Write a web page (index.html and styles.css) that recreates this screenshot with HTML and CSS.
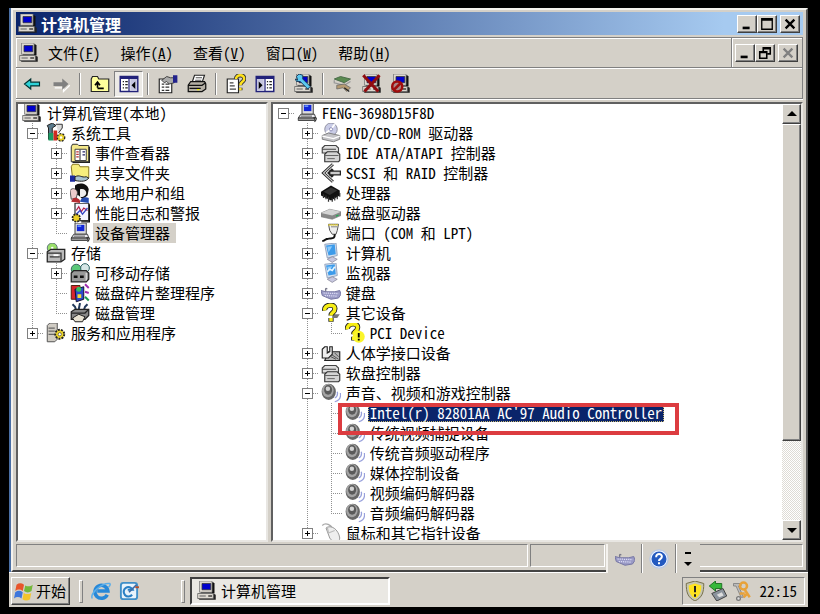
FILE: index.html
```
<!DOCTYPE html>
<html lang="zh-CN">
<head>
<meta charset="utf-8">
<title>计算机管理</title>
<link rel="stylesheet" href="styles.css">
</head>
<body>

<!-- icon sheet, every icon on a 16x16 grid -->
<svg class="sheet" aria-hidden="true">
<symbol id="pc" viewBox="0 0 16 16">
<path d="M3 1h10l1 1v8H3z" fill="#111"/><path d="M2 0h10v9H2z" fill="#ddd8d0" stroke="#777" stroke-width=".6"/><path d="M4 2h7v5H4z" fill="#00c" stroke="#333" stroke-width=".6"/>
<path d="M1 10h12l2 1v4H2l-1-1z" fill="#222"/><path d="M0.500 10h12.500v4H.5z" fill="#dcd8d0" stroke="#666" stroke-width=".6"/><path d="M2 12h5" stroke="#777"/><path d="M9 12h3" stroke="#222"/>
</symbol>
<symbol id="laptop" viewBox="0 0 16 16">
<path d="M4 0h9v9H4z" fill="#ddd" stroke="#444" stroke-width=".8"/><path d="M5.500 1.500h6v5h-6z" fill="#1226d8"/><path d="M6 2h3v1H6z" fill="#8bf"/>
<path d="M3 9h11l1 3H1z" fill="#e8e8ee" stroke="#444" stroke-width=".8"/><path d="M1 12h13v2H1z" fill="#999" stroke="#222" stroke-width=".6"/><path d="M3 10.500h9" stroke="#777"/><path d="M13 12c3-1 3 1 1 3" fill="none" stroke="#333"/>
</symbol>
<symbol id="back" viewBox="0 0 16 16"><path d="M2 8l5-4v2.500h7v3H7V12z" fill="#2ed3d8" stroke="#033" stroke-width=".9"/></symbol>
<symbol id="fwd" viewBox="0 0 16 16"><path d="M15 9l-5 5v-3H3" fill="none" stroke="#fff"/><path d="M14 8L9 3.500v3H2v3h7v3z" fill="#808080"/></symbol>
<symbol id="up" viewBox="0 0 16 16"><path d="M1 4l1-2h4l1 2h8v10H1z" fill="#ffff9c" stroke="#222" stroke-width=".9"/><path d="M6 11V7M4 9l2-2.500L8 9M6 11.500h5" fill="none" stroke="#000" stroke-width="1.300"/></symbol>
<symbol id="tree" viewBox="0 0 16 16"><path d="M1 2h14v12H1z" fill="#fff" stroke="#22227a" stroke-width="1.200"/><path d="M1 2h14v2H1z" fill="#22227a"/><path d="M8 4v10" stroke="#22227a"/><path d="M9 4h5.500v9.500H9z" fill="#c5c5df"/><path d="M3 6h1m1 0h2M3 8.500h1m1 0h2M3 11h1m1 0h2" stroke="#222"/><path d="M13 6v6l-3-3z" fill="#000"/></symbol>
<symbol id="action" viewBox="0 0 16 16"><path d="M1 2h14v12H1z" fill="#fff" stroke="#22227a" stroke-width="1.200"/><path d="M1 2h14v2H1z" fill="#22227a"/><path d="M8 4v10" stroke="#22227a"/><path d="M1.500 4H7v9.500H1.500z" fill="#c5c5df"/><path d="M9.500 6h1m1 0h2m-4 2.500h1m1 0h2m-4 2.500h1m1 0h2" stroke="#222"/><path d="M3 6v6l3-3z" fill="#000"/></symbol>
<symbol id="props" viewBox="0 0 16 16"><path d="M1 4h10v11H1z" fill="#fff" stroke="#222" stroke-width=".9"/><path d="M3 8h2m1 0h3M3 10.500h2m1 0h3M3 13h2m1 0h3" stroke="#333"/><path d="M3 5l4-3 3 1h3v4l-4 1-2-2-2 1z" fill="#aaa" stroke="#333" stroke-width=".7"/><path d="M12 1h3.500v6H12z" fill="#22228c"/></symbol>
<symbol id="print" viewBox="0 0 16 16"><path d="M6 1h8l-2 6H4z" fill="#fff" stroke="#222" stroke-width=".9"/><path d="M7 3h5M6.500 5h5" stroke="#555" stroke-width=".8"/><path d="M3 6h11l1 2v4l-3 2H1V9z" fill="#b5b0a5" stroke="#111"/><path d="M1 9h11l3-2M2 11.500h9" fill="none" stroke="#111"/><path d="M8 12h2v1H8z" fill="#ee0"/></symbol>
<symbol id="help" viewBox="0 0 16 16"><path d="M1 4h9v11H1z" fill="#fff" stroke="#222" stroke-width=".9"/><path d="M3 7h3M3 9.500h4M3 12h5" stroke="#444"/><path d="M8 4c0-4 7-4 6.500 0 0 2.500-3 2-3 5M11.500 11v2" fill="none" stroke="#333" stroke-width="3.400"/><path d="M8 4c0-4 7-4 6.500 0 0 2.500-3 2-3 5M11.500 11v2" fill="none" stroke="#ffe21c" stroke-width="2"/></symbol>
<symbol id="scan" viewBox="0 0 16 16"><use href="#pc"/><path d="M2 2l2-2 3 1v3l6 6-2 2-6-6H2l-1-2 2 1z" fill="#5cc8ee" stroke="#135" stroke-width=".7"/></symbol>
<symbol id="update" viewBox="0 0 16 16"><path d="M1 4l5-2 8 2-5 3z" fill="#5a8a50" stroke="#464" stroke-width=".7"/><path d="M1 5v2l8 2 5-3" fill="none" stroke="#999"/><path d="M3 9l6-1 5 3-3 3-3-3-5 1z" fill="#b59b72" stroke="#666" stroke-width=".6"/><path d="M9 11l4 3" stroke="#222"/></symbol>
<symbol id="uninst" viewBox="0 0 16 16"><use href="#pc"/><path d="M1 1l12 13M14 1L2 14" stroke="#900c10" stroke-width="2.400"/></symbol>
<symbol id="disable" viewBox="0 0 16 16"><use href="#pc"/><circle cx="5" cy="10" r="4" fill="#a88" stroke="#a00d0d" stroke-width="2"/><path d="M2 13l6-6" stroke="#a00d0d" stroke-width="2"/></symbol>
<symbol id="tools" viewBox="0 0 16 16"><path d="M1 2l4-2 3 2-3 2v9H2V4z" fill="#5a7a8c" stroke="#222" stroke-width=".8"/><path d="M2 8h4v6H2z" fill="#1d9a63"/><path d="M6 6h3v8H6z" fill="#d02a20"/><path d="M8 1l5 0v3l-3 4" fill="#ddd" stroke="#333" stroke-width=".8"/><circle cx="12" cy="11.500" r="3" fill="#e5cc2a" stroke="#222" stroke-dasharray="1.500 1"/><circle cx="12" cy="11.500" r="1" fill="#fff"/></symbol>
<symbol id="event" viewBox="0 0 16 16"><path d="M1 3l1-2h4l1 1h8v13H1z" fill="#f4e88a" stroke="#333" stroke-width=".8"/><path d="M4 5h9v9H4z" fill="#fff" stroke="#444" stroke-width=".8"/><path d="M8 5v9" stroke="#555"/><path d="M5 7h2M5 9h2m-2 2h2" stroke="#b33"/><path d="M10 7h2m-2 2.500h2" stroke="#226"/><path d="M15.500 3v12.500H2" fill="none" stroke="#222"/></symbol>
<symbol id="share" viewBox="0 0 16 16"><path d="M1 3l1-2h5l1 2h7v9H2z" fill="#f7ee7c" stroke="#887820" stroke-width=".8"/><path d="M0 10h4v5H0z" fill="#1a2aa0"/><path d="M4 11c4-2 5 1 9 0l2 1c-2 3-6 3-11 2z" fill="#aac4d0" stroke="#222" stroke-width=".8"/></symbol>
<symbol id="users" viewBox="0 0 16 16"><path d="M4 2c3-3 10-2 11 3l-1 5-4 3-3-3-3-1z" fill="#111"/><path d="M8 5c3-1 5 1 5 3s-3 4-5 3z" fill="#eee"/><path d="M0 6c2-3 6-1 6 2l-1 4-4 1z" fill="#ecc" stroke="#444" stroke-width=".7"/><path d="M1 15c1-4 5-4 7-1v2z" fill="#b52c32"/><path d="M8 15c1-4 5-4 7-3v4z" fill="#234bb0"/></symbol>
<symbol id="perf" viewBox="0 0 16 16"><path d="M4 0h11v14H4z" fill="#f5f5ff" stroke="#333"/><path d="M5 6l2-3 2 4 2-3 3 2" fill="none" stroke="#b21d46"/><path d="M5 9l3-3 2 3 4-5" fill="none" stroke="#3445c5"/><circle cx="5" cy="12" r="3" fill="#ecd026" stroke="#222" stroke-width="1.400" stroke-dasharray="1.500 .8"/><path d="M15.500 1v14H9" fill="none" stroke="#111"/></symbol>
<symbol id="storage" viewBox="0 0 16 16"><circle cx="5" cy="4" r="4" fill="#9be06a" stroke="#567" stroke-width=".7"/><circle cx="5" cy="4" r="1" fill="#fff"/><path d="M1 7l3-2h11v8l-3 2H1z" fill="#bbb" stroke="#222"/><path d="M1 8h11v7M3 11h8" fill="none" stroke="#333"/><path d="M6 9h4v1.500H6z" fill="#fff"/></symbol>
<symbol id="removable" viewBox="0 0 16 16"><circle cx="5" cy="5" r="4" fill="#5cc878" stroke="#355" stroke-width=".7"/><circle cx="12" cy="4" r="3.500" fill="#d6e6e6" stroke="#366" stroke-width=".8"/><path d="M1 8l2-2h10l2 2v5l-2 2H1z" fill="#999" stroke="#222"/><path d="M3 10h3v2H3zm5 0h3v2H8z" fill="#111"/><path d="M13 8v6" stroke="#ddd"/></symbol>
<symbol id="defrag" viewBox="0 0 16 16"><path d="M1 2h7v11H1z" fill="#d8252c" stroke="#521" stroke-width=".8"/><path d="M4 5l7-2v10l-6 2z" fill="#2b4bcc" stroke="#113" stroke-width=".8"/><circle cx="7" cy="5" r="2" fill="#38c05c"/><path d="M6 9h3v3H6z" fill="#f3db36"/><path d="M12 1l3 3M12 7l3 1" stroke="#a02db0" stroke-width="1.500"/><path d="M12 11l3 3" stroke="#1b9b4c" stroke-width="1.500"/></symbol>
<symbol id="diskmgmt" viewBox="0 0 16 16"><path d="M2 1l2 2 1 3M8 0l-1 5M14 1l-2 2-1 3" fill="none" stroke="#223a5c" stroke-width="1.600"/><path d="M1 7l3-2h11v5l-3 3H1z" fill="#888" stroke="#222"/><path d="M1 8h11l3-3" fill="none" stroke="#222"/><path d="M2 12l5-3 5 2-2 4H4z" fill="#e8e2d2" stroke="#222" stroke-width=".8"/></symbol>
<symbol id="services" viewBox="0 0 16 16"><path d="M1 2l2-2h6v13l-2 2H1z" fill="#d0ccc4" stroke="#555" stroke-width=".8"/><path d="M2 4h5M2 6.500h5M2 9h5" stroke="#666"/><circle cx="11" cy="9" r="3.600" fill="#f0d82a" stroke="#222" stroke-width="1.500" stroke-dasharray="1.600 .9"/><circle cx="11" cy="9" r="1.300" fill="#fff" stroke="#333" stroke-width=".5"/></symbol>
<symbol id="cd" viewBox="0 0 16 16"><circle cx="8" cy="5" r="5" fill="#c9cce6" stroke="#889" stroke-width=".7"/><path d="M8 5l3-4M8 5l-4 3" stroke="#fff" stroke-width="1.500"/><circle cx="8" cy="5" r="1.300" fill="#fff" stroke="#77a" stroke-width=".6"/><path d="M1 10l5-2 9 2v3l-5 2-9-2z" fill="#c4c4c8" stroke="#777" stroke-width=".7"/><path d="M1 10.500l9 2 5-2" fill="none" stroke="#fff"/></symbol>
<symbol id="ctrl" viewBox="0 0 16 16"><path d="M1 4l2-2h9l2 2v4H1z" fill="#ddd" stroke="#444" stroke-width=".9"/><path d="M1 5h11" stroke="#444" stroke-width=".8"/><path d="M3 9l2-2h8l2 2v5l-1 1H3z" fill="#d4d4d4" stroke="#333" stroke-width=".9"/><path d="M3 10h11M5 12.500h6" fill="none" stroke="#666" stroke-width=".8"/></symbol>
<symbol id="scsi" viewBox="0 0 16 16"><path d="M9.500 1L2 8l7.500 7M9.500 5l-3 3 3 3" fill="none" stroke="#222" stroke-width="2.400"/><path d="M9.500 1L2 8l7.500 7" fill="none" stroke="#ccc" stroke-width=".9"/><path d="M7 6.500h8.500v3H7z" fill="#ccc" stroke="#222"/></symbol>
<symbol id="cpu" viewBox="0 0 16 16"><path d="M0 7l8-5 7 4v4l-7 4-8-4z" fill="#111"/><path d="M2 9v3m2-2v3m2-2v4m3-3v3m2-4v3m2-4v3m2-5v3" stroke="#333"/><path d="M2 7l6-3.500L13 6l-6 3.500z" fill="#333"/></symbol>
<symbol id="disk" viewBox="0 0 16 16"><path d="M0 8l7-3 9 2v3l-7 3-9-2z" fill="#888" stroke="#777" stroke-width=".5"/><path d="M0 8l7-3 9 2-7 3z" fill="#d4d4d4"/><path d="M12 10.500l2-.8" stroke="#2a5"/></symbol>
<symbol id="port" viewBox="0 0 16 16"><path d="M6 1h8l-1 5-1 3H9L7 6z" fill="#eee" stroke="#555" stroke-width=".8"/><path d="M6 1.500h8" stroke="#e8d22e" stroke-width="1.500" stroke-dasharray="1 .6"/><path d="M8 3h5" stroke="#999"/><path d="M11 9c0 4-2 3-5 3.500-3 0-2 1.500-5 2" fill="none" stroke="#111" stroke-width="1.600"/></symbol>
<symbol id="lcd" viewBox="0 0 16 16"><path d="M3 1l9-1 1 10-8 2z" fill="#d6e0ee" stroke="#889ab8" stroke-width=".7"/><path d="M4 2l7-1 .8 8L6 10z" fill="#3d9bea"/><path d="M5 3l4-.5-3 5z" fill="#8fcbfa"/><path d="M5 13l4-2 4 2-4 2.500z" fill="#c8c8e0" stroke="#889" stroke-width=".6"/></symbol>
<symbol id="monitor" viewBox="0 0 16 16"><use href="#lcd"/><path d="M5 7l2-2 2 1 2-3" fill="none" stroke="#e6f6ff" stroke-width="1.300"/></symbol>
<symbol id="kbd" viewBox="0 0 16 16"><path d="M4 7c-1-3 0-3 1-2" fill="none" stroke="#778"/><path d="M0 6l4 1 7 0 4-1 1 3-2 3-6 1-7-3z" fill="#9a9ac6" stroke="#7878a4" stroke-width=".8"/><path d="M2 8l12 .5M3 10l10 .5" stroke="#dcdcf4" stroke-dasharray="1 .7"/></symbol>
<symbol id="unknown" viewBox="0 0 16 16"><path d="M9 9h6l-2 3H9z" fill="#777"/><path d="M3 6C2 1 12 0 11 5c0 3-3 2.500-3 5M8 12v3" fill="none" stroke="#222" stroke-width="4.200"/><path d="M3 6C2 1 12 0 11 5c0 3-3 2.500-3 5M8 12v2.600" fill="none" stroke="#f7ee14" stroke-width="2.800"/></symbol>
<symbol id="warn" viewBox="0 0 16 16"><use href="#unknown" x="-1" y="-1"/><circle cx="11" cy="11" r="4.800" fill="#fbf52a"/><path d="M11 8v3.500m0 1v1.500" stroke="#000" stroke-width="1.500"/></symbol>
<symbol id="hid" viewBox="0 0 16 16"><path d="M6 7h9v7H3z" fill="#b5b5b5" stroke="#222" stroke-width=".9"/><path d="M8 9l6 4M8 11l4 2M11 8l3 3" stroke="#555" stroke-width=".8"/><path d="M1 5l2-2h2v5l2-1V3h2v6l-3 3H1z" fill="#eee" stroke="#222" stroke-width=".9"/></symbol>
<symbol id="sound" viewBox="0 0 16 16"><path d="M11 12c2-1 2.500-3 2-5M11 15c4-1 5-4 4.500-7" fill="none" stroke="#98a1dc"/><ellipse cx="6.200" cy="7" rx="5.700" ry="6.500" fill="#686868"/><ellipse cx="5.500" cy="6" rx="4.600" ry="5.300" fill="#a4a4a4"/><ellipse cx="5.700" cy="5.500" rx="3.200" ry="3.900" fill="#5a5a5a"/><circle cx="5.500" cy="4.500" r="1.800" fill="#d4d4d4"/></symbol>
<symbol id="mouse" viewBox="0 0 16 16"><path d="M1 2c3-3 7 0 8 2" fill="none" stroke="#aaa"/><path d="M4 4c4-3 10 1 11 8 0 4-6 4-8 0z" fill="#eee" stroke="#999" stroke-width=".8"/><path d="M5 3l1 5 5-2" fill="none" stroke="#bbb"/></symbol>
<symbol id="flag" viewBox="0 0 16 16"><path d="M2 3c2-1.500 4-1.500 6 0L7 8C5 6.500 3 6.500 1 8z" fill="#e8552b"/><path d="M9 3.500c2 1 4 1 6-.5l-1 5c-2 1.500-4 1.500-6 0z" fill="#74b83a"/><path d="M1 9c2-1.500 4-1.500 6 0l-1 5c-2-1.500-4-1.500-6 0z" fill="#3e76dc"/><path d="M7.800 9.500c2 1.300 4 1.300 6 0l-1 5c-2 1.500-4 1.500-6 0z" fill="#f3c42c"/></symbol>
<symbol id="ie" viewBox="0 0 16 16"><path d="M13 11A5.200 5.200 0 1 1 13.500 8H5" fill="none" stroke="#2788d8" stroke-width="2.800"/><path d="M1 14C-1 10 9 1 15 2c1 1 0 2-1 3" fill="none" stroke="#5aaeea" stroke-width="1.200"/></symbol>
<symbol id="desk" viewBox="0 0 16 16"><rect x="1.500" y="1.500" width="13" height="13" rx="2" fill="#e8f3fb" stroke="#3f8fc8" stroke-width="1.500"/><path d="M10.500 11A3.800 3.800 0 1 1 11 7H7" fill="none" stroke="#2a80c4" stroke-width="1.700"/><path d="M8 9l6-6" stroke="#3a6ca8" stroke-width="1.400"/><path d="M13 5h3" stroke="#b5502c" stroke-width="1.500"/></symbol>
<symbol id="shield" viewBox="0 0 16 16"><path d="M8 0l7 2c0 7-1 11-7 14C2 13 1 9 1 2z" fill="#c6c6b0" stroke="#77704c" stroke-width=".8"/><path d="M8 2l5 1.500c0 5-1 8-5 10.500-4-2.500-5-5.500-5-10.500z" fill="#ffe320"/><path d="M8 4v5m0 1.500v2" stroke="#222" stroke-width="1.600"/></symbol>
<symbol id="eject" viewBox="0 0 16 16"><path d="M3 10l9-4 3 6-8 4z" fill="#8b939c" stroke="#444" stroke-width=".8"/><path d="M7 11l4-2 1.500 2.500L9 13z" fill="#ddd"/><path d="M1 4l5-4v2h5v4H6v2z" fill="#36b83a" stroke="#176a1b" stroke-width=".7"/></symbol>
<symbol id="keys" viewBox="0 0 16 16"><path d="M2 2h6v2H6l4 9H8L4 4H2z" fill="#bbb" stroke="#777" stroke-width=".6"/><circle cx="6" cy="14" r="1.500" fill="#ddd" stroke="#777"/><circle cx="10" cy="4" r="2.800" fill="none" stroke="#e8a23a" stroke-width="2"/><path d="M11 7l4 6M11 10H7m6 0l-3 3" stroke="#e8a23a" stroke-width="2"/></symbol>
<symbol id="ask" viewBox="0 0 16 16"><circle cx="8" cy="8" r="7.300" fill="#eef4ff" stroke="#b9c8e4"/><circle cx="8" cy="8" r="6" fill="#2359c0"/><path d="M5.700 6.500c0-3.400 4.800-3 4.600-.3 0 1.700-2.300 1.600-2.300 3.300m0 1v1.600" fill="none" stroke="#fff" stroke-width="1.600"/></symbol>
<symbol id="min" viewBox="0 0 16 16"><path d="M3 11h8v3H3z"/></symbol>
<symbol id="max" viewBox="0 0 16 16"><path d="M2 2h12v12H2z" fill="none" stroke="#000" stroke-width="1.500"/><path d="M2 2.800h12" stroke="#000" stroke-width="3"/></symbol>
<symbol id="close" viewBox="0 0 16 16"><path d="M3 3l10 10M13 3L3 13" stroke="currentColor" stroke-width="2.600"/></symbol>
<symbol id="restore" viewBox="0 0 16 16"><path d="M6 6V2h8v7h-3M6 3h8M2 6.500h8V14H2zM2 7.500h8" fill="none" stroke="#000" stroke-width="1.800"/></symbol>
<symbol id="aup" viewBox="0 0 16 16"><path d="M8 5l5 5H3z"/></symbol>
<symbol id="adown" viewBox="0 0 16 16"><path d="M3 6h10l-5 5z"/></symbol>
</svg>

<div class="screen">
<main class="window">

<header class="title">
<svg class="ico"><use href="#pc"/></svg>
<h1>计算机管理</h1>
<div class="winbtns">
<button aria-label="最小化"><svg><use href="#min"/></svg></button>
<button aria-label="最大化"><svg><use href="#max"/></svg></button>
<button class="apart" aria-label="关闭"><svg><use href="#close"/></svg></button>
</div>
</header>

<div class="bars">
<nav class="menu">
<svg class="ico"><use href="#pc"/></svg>
<button>文件(<u>F</u>)</button>
<button>操作(<u>A</u>)</button>
<button>查看(<u>V</u>)</button>
<button>窗口(<u>W</u>)</button>
<button>帮助(<u>H</u>)</button>
<div class="winbtns mdi">
<button aria-label="最小化子窗口"><svg><use href="#min"/></svg></button>
<button aria-label="还原"><svg><use href="#restore"/></svg></button>
<button class="apart" aria-label="关闭子窗口" disabled><svg><use href="#close"/></svg></button>
</div>
</nav>
<div class="tools">
<button aria-label="后退"><svg class="ico"><use href="#back"/></svg></button>
<button aria-label="前进"><svg class="ico"><use href="#fwd"/></svg></button>
<i></i>
<button aria-label="向上"><svg class="ico"><use href="#up"/></svg></button>
<button class="on" aria-label="显示控制台树"><svg class="ico"><use href="#tree"/></svg></button>
<i></i>
<button aria-label="属性"><svg class="ico"><use href="#props"/></svg></button>
<button aria-label="打印"><svg class="ico"><use href="#print"/></svg></button>
<i></i>
<button aria-label="帮助"><svg class="ico"><use href="#help"/></svg></button>
<button aria-label="操作窗格"><svg class="ico"><use href="#action"/></svg></button>
<i></i>
<button aria-label="扫描硬件"><svg class="ico"><use href="#scan"/></svg></button>
<i></i>
<button aria-label="更新驱动程序"><svg class="ico"><use href="#update"/></svg></button>
<button aria-label="卸载"><svg class="ico"><use href="#uninst"/></svg></button>
<button aria-label="停用"><svg class="ico"><use href="#disable"/></svg></button>
</div>
</div>

<div class="panes">
<section class="pane left">
<ul class="tree">
<li><div class="row"><svg class="ico"><use href="#pc"/></svg><span>计算机管理(本地)</span></div></li>
<li><div class="row"><b><button class="minus" aria-label="折叠"></button></b><svg class="ico"><use href="#tools"/></svg><span>系统工具</span></div>
<ul>
<li><div class="row"><b><button class="plus" aria-label="展开"></button></b><svg class="ico"><use href="#event"/></svg><span>事件查看器</span></div></li>
<li><div class="row"><b><button class="plus" aria-label="展开"></button></b><svg class="ico"><use href="#share"/></svg><span>共享文件夹</span></div></li>
<li><div class="row"><b><button class="plus" aria-label="展开"></button></b><svg class="ico"><use href="#users"/></svg><span>本地用户和组</span></div></li>
<li><div class="row"><b><button class="plus" aria-label="展开"></button></b><svg class="ico"><use href="#perf"/></svg><span>性能日志和警报</span></div></li>
<li><div class="row"><b></b><svg class="ico"><use href="#laptop"/></svg><span class="current">设备管理器</span></div></li>
</ul>
</li>
<li><div class="row"><b><button class="minus" aria-label="折叠"></button></b><svg class="ico"><use href="#storage"/></svg><span>存储</span></div>
<ul>
<li><div class="row"><b><button class="plus" aria-label="展开"></button></b><svg class="ico"><use href="#removable"/></svg><span>可移动存储</span></div></li>
<li><div class="row"><b></b><svg class="ico"><use href="#defrag"/></svg><span>磁盘碎片整理程序</span></div></li>
<li><div class="row"><b></b><svg class="ico"><use href="#diskmgmt"/></svg><span>磁盘管理</span></div></li>
</ul>
</li>
<li><div class="row"><b><button class="plus" aria-label="展开"></button></b><svg class="ico"><use href="#services"/></svg><span>服务和应用程序</span></div></li>
</ul>
</section>

<section class="pane right">
<ul class="tree">
<li><div class="row"><b><button class="minus" aria-label="折叠"></button></b><svg class="ico"><use href="#laptop"/></svg><span>FENG-3698D15F8D</span></div>
<ul>
<li><div class="row"><b><button class="plus" aria-label="展开"></button></b><svg class="ico"><use href="#cd"/></svg><span>DVD/CD-ROM 驱动器</span></div></li>
<li><div class="row"><b><button class="plus" aria-label="展开"></button></b><svg class="ico"><use href="#ctrl"/></svg><span>IDE ATA/ATAPI 控制器</span></div></li>
<li><div class="row"><b><button class="plus" aria-label="展开"></button></b><svg class="ico"><use href="#scsi"/></svg><span>SCSI 和 RAID 控制器</span></div></li>
<li><div class="row"><b><button class="plus" aria-label="展开"></button></b><svg class="ico"><use href="#cpu"/></svg><span>处理器</span></div></li>
<li><div class="row"><b><button class="plus" aria-label="展开"></button></b><svg class="ico"><use href="#disk"/></svg><span>磁盘驱动器</span></div></li>
<li><div class="row"><b><button class="plus" aria-label="展开"></button></b><svg class="ico"><use href="#port"/></svg><span>端口 (COM 和 LPT)</span></div></li>
<li><div class="row"><b><button class="plus" aria-label="展开"></button></b><svg class="ico"><use href="#lcd"/></svg><span>计算机</span></div></li>
<li><div class="row"><b><button class="plus" aria-label="展开"></button></b><svg class="ico"><use href="#monitor"/></svg><span>监视器</span></div></li>
<li><div class="row"><b><button class="plus" aria-label="展开"></button></b><svg class="ico"><use href="#kbd"/></svg><span>键盘</span></div></li>
<li><div class="row"><b><button class="minus" aria-label="折叠"></button></b><svg class="ico"><use href="#unknown"/></svg><span>其它设备</span></div>
<ul>
<li><div class="row"><b></b><svg class="ico"><use href="#warn"/></svg><span>PCI Device</span></div></li>
</ul>
</li>
<li><div class="row"><b><button class="plus" aria-label="展开"></button></b><svg class="ico"><use href="#hid"/></svg><span>人体学接口设备</span></div></li>
<li><div class="row"><b><button class="plus" aria-label="展开"></button></b><svg class="ico"><use href="#ctrl"/></svg><span>软盘控制器</span></div></li>
<li><div class="row"><b><button class="minus" aria-label="折叠"></button></b><svg class="ico"><use href="#sound"/></svg><span>声音、视频和游戏控制器</span></div>
<ul>
<li class="marked"><div class="row"><b></b><svg class="ico"><use href="#sound"/></svg><span class="selected">Intel(r) 82801AA AC'97 Audio Controller</span></div></li>
<li><div class="row"><b></b><svg class="ico"><use href="#sound"/></svg><span>传统视频捕捉设备</span></div></li>
<li><div class="row"><b></b><svg class="ico"><use href="#sound"/></svg><span>传统音频驱动程序</span></div></li>
<li><div class="row"><b></b><svg class="ico"><use href="#sound"/></svg><span>媒体控制设备</span></div></li>
<li><div class="row"><b></b><svg class="ico"><use href="#sound"/></svg><span>视频编码解码器</span></div></li>
<li><div class="row"><b></b><svg class="ico"><use href="#sound"/></svg><span>音频编码解码器</span></div></li>
</ul>
</li>
<li><div class="row"><b><button class="plus" aria-label="展开"></button></b><svg class="ico"><use href="#mouse"/></svg><span>鼠标和其它指针设备</span></div></li>
</ul>
</li>
</ul>
<div class="scroll">
<button aria-label="向上滚动"><svg><use href="#aup"/></svg></button>
<div class="thumb"></div>
<div class="track"></div>
<button aria-label="向下滚动"><svg><use href="#adown"/></svg></button>
</div>
</section>
</div>

<footer class="status">
<div class="wide"></div><div class="mid"></div><div class="last"></div>
</footer>

<!-- language bar floats over the status bar -->
<div class="langbar">
<button aria-label="键盘布局"><svg class="ico"><use href="#kbd"/></svg></button>
<button aria-label="语言栏帮助"><svg class="ico"><use href="#ask"/></svg></button>
<button class="opts" aria-label="选项"><svg viewBox="0 0 8 16"><path d="M1 1h6v2H1zM0 11h8l-4 4z"/></svg></button>
</div>
</main>

<footer class="taskbar">
<button class="start"><svg class="ico"><use href="#flag"/></svg>开始</button>
<i class="grip"></i>
<div class="quick">
<button aria-label="Internet Explorer"><svg class="ico"><use href="#ie"/></svg></button>
<button aria-label="显示桌面"><svg class="ico"><use href="#desk"/></svg></button>
</div>
<i class="grip"></i>
<button class="task"><svg class="ico"><use href="#pc"/></svg>计算机管理</button>
<div class="tray">
<svg class="ico"><use href="#shield"/></svg>
<svg class="ico"><use href="#eject"/></svg>
<svg class="ico"><use href="#keys"/></svg>
<time>22:15</time>
</div>
</footer>
</div>

</body>
</html>
```
FILE: styles.css
```
*, *::after { box-sizing:border-box; }
body {
margin:0; padding:8px 12px 7px 9px; height:100vh; background:#000; color:#000;
font:15px/20px "Noto Sans CJK SC", sans-serif; font-feature-settings:"hwid"; }
button { font:inherit; font-feature-settings:inherit; color:inherit; background:none; border:0; padding:0; margin:0; }
ul { list-style:none; margin:0; padding:0; }
.sheet { display:none; }
.ico { width:20px; height:20px; flex:none; display:block; }

.screen { height:100%; display:flex; flex-direction:column; background:#4a6fa5; }
.window {
position:relative; flex:1; min-height:0; display:flex; flex-direction:column;
margin-left:2px; padding:2px 3px 3px; background:#d4d0c8;
border:2px solid; border-color:#f4f2ee #555 #444 #f4f2ee; }

/* title bar */
.title { display:flex; align-items:center; height:23px; padding:0 3px 0 2px; background:linear-gradient(to right, #0a246a, #a6caf0 90%); }
.title h1 { flex:1; margin:0 0 0 3px; font-size:16px; line-height:20px; font-weight:bold; color:#fff; }
.winbtns { display:flex; }
.winbtns button, .scroll button, .thumb {
display:grid; place-items:center; background:#d4d0c8;
border:1px solid; border-color:#fff #404040 #404040 #fff; box-shadow:inset -1px -1px #808080; }
.winbtns button { width:20px; height:18px; }
.winbtns svg { width:14px; height:14px; }
.winbtns .apart { margin-left:3px; }
.winbtns button:disabled { color:#808080; }

/* menu and toolbar */
.bars { margin-top:2px; border:1px solid #808080; border-width:1px 1px 1px 0; box-shadow:inset 1px 1px #fff, 0 1px #fff; }
.menu { display:flex; align-items:center; gap:20px; height:30px; padding-left:3px; border-bottom:1px solid #808080; }
.menu .ico { margin-right:-11px; }
.mdi { align-self:stretch; align-items:center; margin-left:auto; padding:0 4px 0 3px; border-left:1px solid #808080; box-shadow:inset 1px 0 #fff; }
.tools { display:flex; align-items:center; height:30px; padding-left:1px; border-top:1px solid #fff; }
.tools button { width:29px; height:26px; display:grid; place-items:center; }
.tools .on { background:#eceae6; border:1px solid; border-color:#808080 #fff #fff #808080; }
.tools i { width:2px; height:22px; margin:0 4px; border-left:1px solid #808080; border-right:1px solid #fff; }

/* panes */
.panes { flex:1; min-height:0; display:flex; gap:3px; margin-top:3px; }
.pane { background:#fff; border:2px solid; border-color:#606060 #e8e6e2 #e8e6e2 #606060; overflow:hidden; }
.left { flex:0 0 32%; padding-left:2px; }
.right { flex:1; display:flex; }
.right > .tree { flex:1; min-width:0; margin-left:-2px; }
.tree { margin-top:-1px; }
.tree li { background:repeating-linear-gradient(#909090 0 1px, transparent 1px 2px) 12px 0 / 1px 100% no-repeat; }
.tree li:last-child { background-size:1px 10px; }
.tree > li:first-child { background:none; }
.tree li ul { margin-left:24px; }
.row { display:flex; align-items:center; height:20px; white-space:nowrap; }
.row b { flex:none; width:24px; height:20px; padding:5px 0 0 7px; background:repeating-linear-gradient(to right, #909090 0 1px, transparent 1px 2px) 12px 10px / 12px 1px no-repeat; }
.row b button { display:block; width:11px; height:11px; border:1px solid #808080; }
.row .minus { background:linear-gradient(#000 0 0) center / 5px 1px no-repeat #fff; }
.row .plus { background:linear-gradient(#000 0 0) center / 5px 1px no-repeat, linear-gradient(#000 0 0) center / 1px 5px no-repeat #fff; }
.row .ico { margin:0 2px; }
.row span { margin-left:1px; padding:0 2px; }
.row .current { padding-right:6px; background:#d4d0c8; }
.row .selected { line-height:18px; color:#fff; background:#0a246a; outline:1px dotted #c8b870; outline-offset:-1px; }
.marked { position:relative; }
.marked::after { content:""; position:absolute; left:19px; top:0; width:341px; height:32px; border:4px solid #dc3c40; }

.scroll { flex:none; width:19px; display:flex; flex-direction:column; background:repeating-conic-gradient(#fff 0 25%, #dedbd5 0 50%) 0 0 / 2px 2px; }
.scroll button { height:20px; }
.scroll svg { width:16px; height:16px; }
.thumb { flex:4; }
.track { flex:1; }

/* status bar */
.status { display:flex; gap:2px; height:23px; margin-top:2px; }
.status div { border:1px solid; border-color:#808080 #fff #fff #808080; }
.wide { flex:513; }
.mid { flex:74; }
.last { flex:195; }
.langbar { position:absolute; right:106px; bottom:-3px; z-index:1; display:flex; height:29px; background:#d4d0c8; border-left:2px solid #f4f2ee; }
.langbar button { width:34px; display:grid; place-items:center; border-right:1px solid #808080; box-shadow:1px 0 #fff; }
.langbar .opts { width:24px; border:0; box-shadow:none; }
.opts svg { width:8px; height:16px; }

/* taskbar */
.taskbar { position:relative; display:flex; align-items:center; height:35px; padding:3px 3px 1px 2px; background:#d4d0c8; border-top:1px solid #fff; }
.taskbar button { display:flex; align-items:center; }
.taskbar .start { width:59px; height:28px; padding-left:2px; gap:2px; border:1px solid; border-color:#fff #404040 #404040 #fff; box-shadow:inset -1px -1px #808080; }
.grip { width:4px; height:23px; margin-left:9px; border:1px solid; border-color:#fff #808080 #808080 #fff; }
.quick { display:flex; gap:8px; width:89px; padding-left:8px; }
.taskbar .task { width:200px; height:28px; margin-left:5px; padding-left:5px; gap:4px; background:#eae8e3; border:2px solid; border-color:#404040 #fff #fff #404040; }
.tray { display:flex; align-items:center; gap:3px; height:28px; margin-left:auto; padding:0 7px 0 2px; border:1px solid; border-color:#808080 #fff #fff #808080; }
.tray time { margin-left:5px; }
```
